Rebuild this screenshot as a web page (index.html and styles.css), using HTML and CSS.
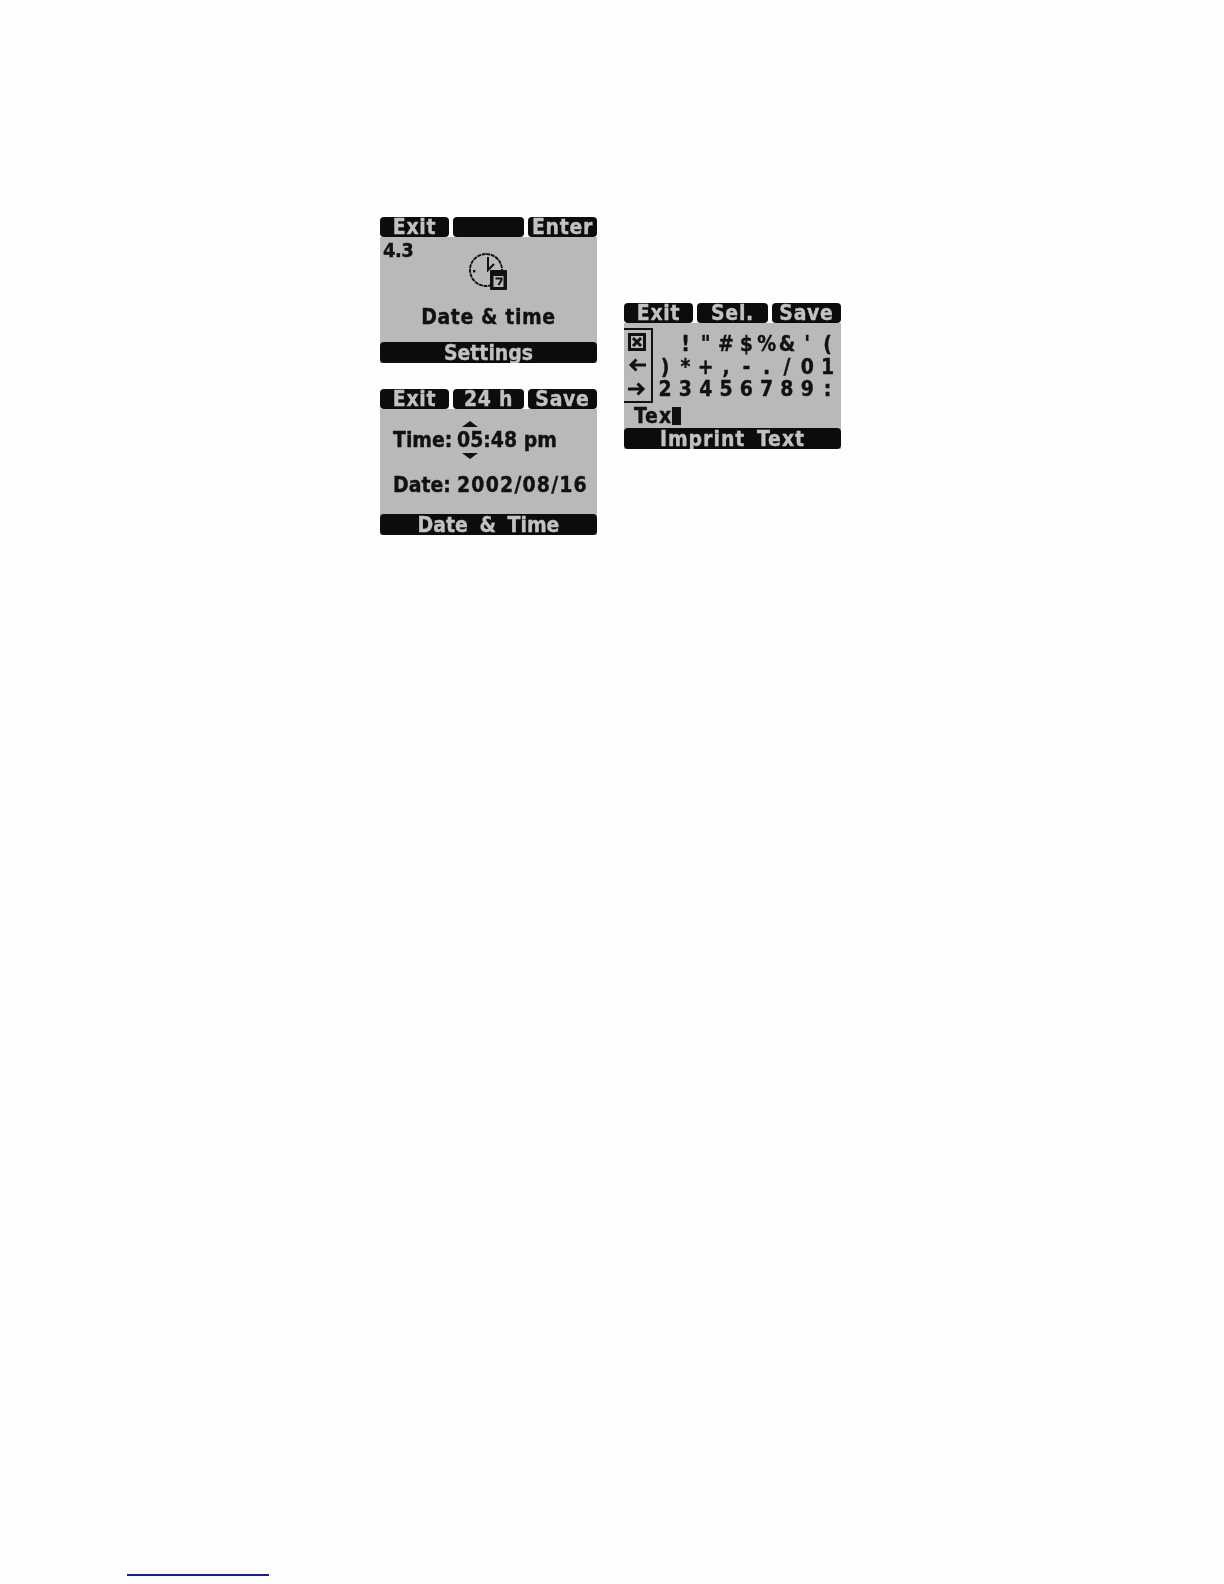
FILE: index.html
```html
<!DOCTYPE html>
<html lang="en">
<head>
<meta charset="utf-8">
<title>Date and time screens</title>
<link rel="stylesheet" href="styles.css">
</head>
<body>
<main class="figures">
  <div class="col">
    <section class="screen">
      <div class="softkeys"><span class="key">Exit</span><span class="key"></span><span class="key">Enter</span></div>
      <div class="body menu">
        <div class="num">4.3</div>
        <svg class="clock" viewBox="0 0 40 40" aria-hidden="true">
          <circle cx="18" cy="18" r="16" fill="none" stroke="#111" stroke-width="1.900" stroke-dasharray="4 .7"/>
          <path d="M20 5v13l6-6" fill="none" stroke="#111" stroke-width="2"/>
          <rect x="5" y="18" width="2.400" height="2.400" fill="#111"/>
          <rect x="22" y="18" width="17" height="20" rx="1" fill="#111"/>
          <rect x="25.500" y="24" width="10" height="11" fill="#b9b9b9"/>
          <path d="M27.500 26.500h6v1.500l-3 5" fill="none" stroke="#111" stroke-width="2"/>
        </svg>
        <div class="title">Date &amp; time</div>
      </div>
      <div class="footbar">Settings</div>
    </section>
    <section class="screen">
      <div class="softkeys"><span class="key">Exit</span><span class="key">24 h</span><span class="key">Save</span></div>
      <div class="body form">
        <div class="row time">
          <span class="label">Time:</span>
          <span class="spin">05<i class="up"></i><i class="down"></i></span><span>:48 pm</span>
        </div>
        <div class="row date"><span class="label">Date:</span><span class="long">2002/08/16</span></div>
      </div>
      <div class="footbar spaced">Date &amp; Time</div>
    </section>
  </div>
  <div class="col shifted">
    <section class="screen">
      <div class="softkeys"><span class="key">Exit</span><span class="key">Sel.</span><span class="key">Save</span></div>
      <div class="body kbd">
        <div class="kbd-top">
          <div class="side">
            <svg class="ic" viewBox="0 0 18 18" aria-hidden="true"><rect x="1.500" y="1.500" width="15" height="15" fill="none" stroke="#111" stroke-width="3"/><path d="M5 5l8 8M13 5l-8 8" stroke="#111" stroke-width="3"/></svg>
            <svg class="ic" viewBox="0 0 18 18" aria-hidden="true"><path d="M3 9h15M8.500 3.500L3 9l5.500 5.500" fill="none" stroke="#111" stroke-width="3"/></svg>
            <svg class="ic" viewBox="0 0 18 18" aria-hidden="true"><path d="M0 9h15M9.500 3.500L15 9l-5.500 5.500" fill="none" stroke="#111" stroke-width="3"/></svg>
          </div>
          <div class="chars">
            <span></span><span>!</span><span>"</span><span>#</span><span>$</span><span>%</span><span>&amp;</span><span>'</span><span>(</span>
            <span>)</span><span>*</span><span>+</span><span>,</span><span>-</span><span>.</span><span>/</span><span>0</span><span>1</span>
            <span>2</span><span>3</span><span>4</span><span>5</span><span>6</span><span>7</span><span>8</span><span>9</span><span>:</span>
          </div>
        </div>
        <div class="entry">Tex<i class="cursor"></i></div>
      </div>
      <div class="footbar wide">Imprint Text</div>
    </section>
  </div>
</main>
<div class="footnote-rule"></div>
</body>
</html>
```
FILE: styles.css
```css
html, body { margin: 0; }
body {
  background: #fefefe;
  display: flex;
  flex-direction: column;
  justify-content: space-between;
  height: 1584px;
  font-family: "DejaVu Sans Condensed", "DejaVu Sans", sans-serif;
  font-weight: 700;
  font-size: 21px;
  color: #111;
  -webkit-text-stroke: .35px currentColor;
}
.figures {
  display: flex;
  gap: 27px;
  padding: 217px 0 0 380px;
  filter: blur(0.5px);
}
.col { display: flex; flex-direction: column; gap: 26px; }
.shifted { padding-top: 86px; }
.screen {
  width: 217px;
  height: 146px;
  background: #b9b9b9;
  display: flex;
  flex-direction: column;
}
.softkeys {
  height: 20px;
  flex: none;
  display: grid;
  grid-template-columns: 69px 71px 69px;
  gap: 4px;
  background: #fefefe;
}
.key, .footbar {
  background: #0c0c0c;
  color: #c2c2c2;
  font-size: 21px;
  text-align: center;
  border-radius: 4px;
}
.key { line-height: 20px; letter-spacing: .7px; }
.footbar {
  flex: none;
  height: 20px;
  padding-top: 1px;
  line-height: 20px;
  overflow: hidden;
}
.spaced { word-spacing: 5px; }
.wide { letter-spacing: 1px; word-spacing: 4px; }
.body { flex: 1; min-height: 0; }

.menu { display: flex; flex-direction: column; align-items: center; }
.num {
  align-self: flex-start;
  font-size: 20px;
  line-height: 20px;
  height: 20px;
  margin: 3px 0 0 3px;
  letter-spacing: -.5px;
}
.clock { width: 40px; height: 40px; margin: -8px 0 0 -1px; display: block; flex: none; }
.title { line-height: 22px; margin-top: 14px; letter-spacing: .6px; }

.form { padding: 20px 0 0 13px; line-height: 22px; }
.row { display: flex; }
.label { width: 64px; flex: none; }
.long { letter-spacing: 1.2px; }
.spin { position: relative; }
.up, .down {
  position: absolute;
  left: 50%;
  margin-left: -8px;
  width: 0;
  height: 0;
  border-left: 8px solid transparent;
  border-right: 8px solid transparent;
}
.up { top: -8px; border-bottom: 6px solid #111; }
.down { bottom: -8px; border-top: 6px solid #111; }
.date { margin-top: 23px; }

.kbd { display: flex; flex-direction: column; padding-top: 5px; }
.kbd-top { display: flex; height: 75px; flex: none; }
.side {
  width: 29px;
  box-sizing: border-box;
  padding-right: 1px;
  border: 2px solid #111;
  border-left: 0;
  display: flex;
  flex-direction: column;
  align-items: center;
  justify-content: space-around;
  flex: none;
}
.ic { width: 18px; height: 18px; display: block; }
.chars {
  display: grid;
  grid-template-columns: repeat(9, 20.300px);
  grid-auto-rows: 22.500px;
  padding: 5px 0 0 2px;
  line-height: 22.500px;
  text-align: center;
}
.entry {
  line-height: 22px;
  letter-spacing: 1px;
  margin-top: 2px;
  padding-left: 10px;
  display: flex;
  align-items: center;
}
.cursor { width: 9px; height: 18px; background: #111; }

.footnote-rule {
  width: 142px;
  height: 2px;
  background: #1c1c96;
  margin: 0 0 8px 127px;
}
```
